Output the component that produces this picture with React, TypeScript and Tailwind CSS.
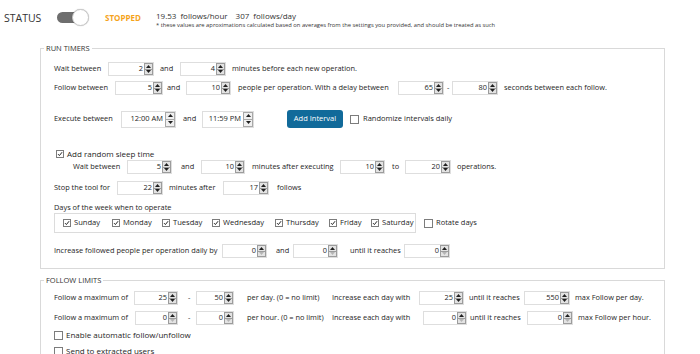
import React from "react";

const TXT = "text-[#1e1e1e]";

function Up({ dim }: { dim?: boolean }) {
  return (
    <svg width="5" height="3" viewBox="0 0 5 3">
      <path d="M0 3 L2.5 0 L5 3Z" fill={dim ? "#b4b4b4" : "#202020"} />
    </svg>
  );
}
function Down({ dim }: { dim?: boolean }) {
  return (
    <svg width="5" height="3" viewBox="0 0 5 3">
      <path d="M0 0 L2.5 3 L5 0Z" fill={dim ? "#b4b4b4" : "#202020"} />
    </svg>
  );
}

function Spin({ downDim }: { downDim?: boolean }) {
  return (
    <div className="flex flex-col w-[9px] h-[12px] border border-[#9c9c9c] bg-[#e3e3e3] shrink-0">
      <div className="flex-1 flex items-center justify-center border-b border-[#9c9c9c]">
        <Up />
      </div>
      <div className="flex-1 flex items-center justify-center">
        <Down dim={downDim} />
      </div>
    </div>
  );
}

function Num({ w, v }: { w: string; v: string }) {
  return (
    <div className={`${w} h-[14px] border border-[#dedede] bg-white flex items-center justify-end shrink-0`}>
      <span className="pr-[1px] leading-none">{v}</span>
      <Spin downDim={v === "0"} />
    </div>
  );
}

function Time({ w, v }: { w: string; v: string }) {
  return (
    <div className={`${w} h-[17px] border border-[#dedede] bg-white flex items-center justify-end shrink-0`}>
      <span className="pr-[2px] leading-none text-[7.5px]">{v}</span>
      <div className="flex flex-col w-[10px] h-[15px] border border-[#a8a8a8] bg-[#f0f0f0] shrink-0">
        <div className="flex-1 flex items-center justify-center border-b border-[#a8a8a8]">
          <Up />
        </div>
        <div className="flex-1 flex items-center justify-center">
          <Down />
        </div>
      </div>
    </div>
  );
}

function T({ c, children }: { c?: string; children: React.ReactNode }) {
  return <span className={`shrink-0 whitespace-nowrap leading-none ${c ?? ""}`}>{children}</span>;
}

function Cb({ checked, s }: { checked?: boolean; s?: string }) {
  return (
    <span className={`${s ?? "w-[9px] h-[9px]"} border border-[#7c7c7c] bg-white flex items-center justify-center shrink-0`}>
      {checked && (
        <svg viewBox="0 0 8 8" className="w-full h-full">
          <path d="M1.4 4.2 L3.2 6.1 L6.8 1.6" stroke="#1f1f1f" strokeWidth="1.3" fill="none" />
        </svg>
      )}
    </span>
  );
}

function Day({ w, label }: { w: string; label: string }) {
  return (
    <div className={`${w} flex items-center shrink-0`}>
      <Cb checked s="w-[8px] h-[8px]" />
      <T c="pl-[3px] text-[7.6px]">{label}</T>
    </div>
  );
}

export default function App() {
  return (
    <div className={`w-[700px] h-[354px] overflow-hidden bg-white font-['Open_Sans','Noto_Sans',sans-serif] ${TXT} text-[7.4px]`}>
      {/* header */}
      <div className="h-[43px] flex items-start">
        <div className="flex items-center h-[36px] pl-[4px]">
          <span className="w-[53px] text-[10.5px] leading-none text-[#333]">STATUS</span>
          <div className="relative w-[32px] h-[18px] shrink-0">
            <div className="absolute left-0 top-[3px] w-[28px] h-[11px] rounded-full bg-[#6e6e6e]" />
            <div className="absolute right-0 top-[0px] w-[17px] h-[17px] rounded-full bg-white border border-[#c9c9c9] shadow-[0_0_1px_rgba(0,0,0,0.3)]" />
          </div>
          <span className="ml-[16px] w-[51px] text-[8px] font-bold text-[#f5a31c] leading-none">STOPPED</span>
        </div>
        <div className="mt-[11px] flex flex-col">
          <div className="h-[10px] flex items-center text-[8px] text-[#333]">
            <T>19.53</T>
            <T c="ml-[4px]">follows/hour</T>
            <T c="ml-[8px]">307</T>
            <T c="ml-[4px]">follows/day</T>
          </div>
          <div className="h-[10px] flex items-center text-[5.8px] text-[#333]">
            <T>* these values are aproximations calculated based on averages from the settings you provided, and should be treated as such</T>
          </div>
        </div>
      </div>

      {/* RUN TIMERS */}
      <fieldset className="ml-[40px] w-[625px] border border-[#d9d9d9] pl-[13px] pb-[10px]">
        <legend className="ml-[-10px] px-[2px] h-[10px] leading-[10px] text-[7.5px] text-[#333]">RUN TIMERS</legend>

        <div className="flex items-center h-[14px] mt-[9px]">
          <T c="w-[54px]">Wait between</T>
          <Num w="w-[46px]" v="2" />
          <T c="w-[26px] pl-[6px]">and</T>
          <Num w="w-[46px]" v="4" />
          <T c="pl-[6px]">minutes before each new operation.</T>
        </div>

        <div className="flex items-center h-[14px] mt-[5px]">
          <T c="w-[61px]">Follow between</T>
          <Num w="w-[48px]" v="5" />
          <T c="w-[23px] pl-[4px]">and</T>
          <Num w="w-[45px]" v="10" />
          <T c="w-[167px] pl-[7px]">people per operation. With a delay between</T>
          <Num w="w-[46px]" v="65" />
          <T c="w-[8px] pl-[3px]">-</T>
          <Num w="w-[46px]" v="80" />
          <T c="pl-[6px]">seconds between each follow.</T>
        </div>

        <div className="flex items-center h-[18px] mt-[15px]">
          <T c="w-[67px]">Execute between</T>
          <Time w="w-[55px]" v="12:00 AM" />
          <T c="w-[26px] pl-[7px]">and</T>
          <Time w="w-[52px]" v="11:59 PM" />
          <button className="ml-[33px] w-[56px] h-[18px] rounded-[3px] bg-[#116a9a] text-white text-[7.5px] leading-none shrink-0">
            Add Interval
          </button>
          <div className="ml-[7px] flex items-center">
            <Cb />
            <T c="pl-[4px] text-[7.5px]">Randomize intervals daily</T>
          </div>
        </div>

        <div className="flex items-center h-[12px] mt-[20px] pl-[2px]">
          <Cb checked s="w-[8px] h-[8px]" />
          <T c="pl-[3px] text-[8px]">Add random sleep time</T>
        </div>

        <div className="flex items-center h-[14px] mt-[0px] pl-[19px]">
          <T c="w-[54px]">Wait between</T>
          <Num w="w-[45px]" v="5" />
          <T c="w-[29px] pl-[9px]">and</T>
          <Num w="w-[44px]" v="10" />
          <T c="w-[95px] pl-[7px]">minutes after executing</T>
          <Num w="w-[45px]" v="10" />
          <T c="w-[20px] pl-[7px]">to</T>
          <Num w="w-[46px]" v="20" />
          <T c="pl-[6px]">operations.</T>
        </div>

        <div className="flex items-center h-[14px] mt-[7px]">
          <T c="w-[63px]">Stop the tool for</T>
          <Num w="w-[46px]" v="22" />
          <T c="w-[60px] pl-[6px]">minutes after</T>
          <Num w="w-[46px]" v="17" />
          <T c="pl-[8px]">follows</T>
        </div>

        <div className="flex items-center h-[10px] mt-[8px]">
          <T>Days of the week when to operate</T>
        </div>

        <div className="flex items-center">
          <div className="w-[362px] h-[20px] border border-[#dcdcdc] flex items-center pl-[8px]">
            <Day w="w-[49px]" label="Sunday" />
            <Day w="w-[50px]" label="Monday" />
            <Day w="w-[50px]" label="Tuesday" />
            <Day w="w-[63px]" label="Wednesday" />
            <Day w="w-[54px]" label="Thursday" />
            <Day w="w-[42px]" label="Friday" />
            <Day w="w-[44px]" label="Saturday" />
          </div>
          <div className="ml-[8px] flex items-center">
            <Cb />
            <T c="pl-[3px] text-[7.5px]">Rotate days</T>
          </div>
        </div>

        <div className="flex items-center h-[14px] mt-[11px]">
          <T c="w-[168px]">Increase followed people per operation daily by</T>
          <Num w="w-[45px]" v="0" />
          <T c="w-[26px] pl-[9px]">and</T>
          <Num w="w-[45px]" v="0" />
          <T c="w-[66px] pl-[12px]">until it reaches</T>
          <Num w="w-[46px]" v="0" />
        </div>
      </fieldset>

      {/* FOLLOW LIMITS */}
      <fieldset className="mt-[6px] ml-[40px] w-[625px] border border-[#d9d9d9] pl-[13px] pb-[10px]">
        <legend className="ml-[-10px] px-[2px] h-[10px] leading-[10px] text-[7.5px] text-[#333]">FOLLOW LIMITS</legend>

        <div className="flex items-center h-[14px] mt-[6px]">
          <T c="w-[80px]">Follow a maximum of</T>
          <Num w="w-[44px]" v="25" />
          <T c="w-[18px] pl-[10px]">-</T>
          <Num w="w-[38px]" v="50" />
          <T c="w-[98px] pl-[13px]">per day. (0 = no limit)</T>
          <T c="w-[87px]">Increase each day with</T>
          <Num w="w-[45px]" v="25" />
          <T c="w-[60px] pl-[5px]">until it reaches</T>
          <Num w="w-[46px]" v="550" />
          <T c="pl-[5px]">max Follow per day.</T>
        </div>

        <div className="flex items-center h-[14px] mt-[6px]">
          <T c="w-[81px]">Follow a maximum of</T>
          <Num w="w-[43px]" v="0" />
          <T c="w-[18px] pl-[10px]">-</T>
          <Num w="w-[38px]" v="0" />
          <T c="w-[98px] pl-[13px]">per hour. (0 = no limit)</T>
          <T c="w-[91px]">Increase each day with</T>
          <Num w="w-[44px]" v="0" />
          <T c="w-[60px] pl-[3px]">until it reaches</T>
          <Num w="w-[46px]" v="0" />
          <T c="pl-[5px]">max Follow per hour.</T>
        </div>

        <div className="flex items-center h-[12px] mt-[4px]">
          <Cb />
          <T c="pl-[3px] text-[8px]">Enable automatic follow/unfollow</T>
        </div>

        <div className="flex items-center h-[12px] mt-[4px]">
          <Cb />
          <T c="pl-[3px] text-[8px]">Send to extracted users</T>
        </div>
        <div className="h-[20px]" />
      </fieldset>
    </div>
  );
}
